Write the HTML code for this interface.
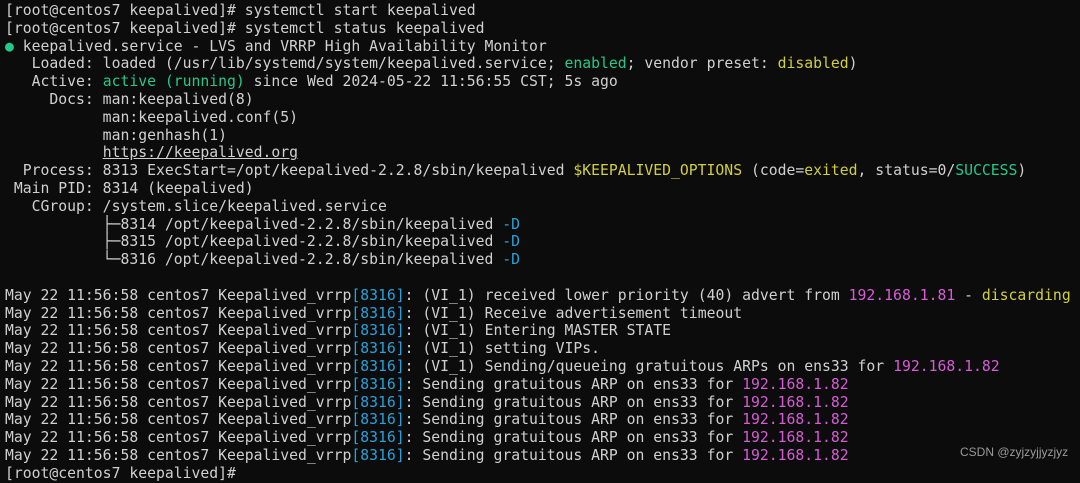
<!DOCTYPE html>
<html><head><meta charset="utf-8"><style>
html,body{margin:0;padding:0;background:#0c0c0c;width:1080px;height:469px;overflow:hidden}
pre{margin:0;position:absolute;left:5px;top:2px;font-family:"DejaVu Sans Mono","Liberation Mono",monospace;font-size:14.76px;line-height:17.8px;color:#d0d0d0}
.g{color:#23c98a}.y{color:#d2cf3a}.m{color:#d65cd6}.b{color:#2aa0d8}.u{text-decoration:underline}
.wm{position:absolute;left:960px;top:445px;font-family:"Liberation Sans",sans-serif;font-size:12px;color:#9a9a9a}
</style></head><body>
<pre>[root@centos7 keepalived]# systemctl start keepalived
[root@centos7 keepalived]# systemctl status keepalived
<span class="g">●</span> keepalived.service - LVS and VRRP High Availability Monitor
   Loaded: loaded (/usr/lib/systemd/system/keepalived.service; <span class="g">enabled</span>; vendor preset: <span class="y">disabled</span>)
   Active: <span class="g">active (running)</span> since Wed 2024-05-22 11:56:55 CST; 5s ago
     Docs: man:keepalived(8)
           man:keepalived.conf(5)
           man:genhash(1)
           <span class="u">https://keepalived.org</span>
  Process: 8313 ExecStart=/opt/keepalived-2.2.8/sbin/keepalived <span class="y">$KEEPALIVED_OPTIONS</span> (code=<span class="y">exited</span>, status=0/<span class="g">SUCCESS</span>)
 Main PID: 8314 (keepalived)
   CGroup: /system.slice/keepalived.service
           ├─8314 /opt/keepalived-2.2.8/sbin/keepalived <span class="b">-D</span>
           ├─8315 /opt/keepalived-2.2.8/sbin/keepalived <span class="b">-D</span>
           └─8316 /opt/keepalived-2.2.8/sbin/keepalived <span class="b">-D</span>

May 22 11:56:58 centos7 Keepalived_vrrp<span class="b">[8316]</span>: (VI_1) received lower priority (40) advert from <span class="m">192.168.1.81</span> - <span class="y">discarding</span>
May 22 11:56:58 centos7 Keepalived_vrrp<span class="b">[8316]</span>: (VI_1) Receive advertisement timeout
May 22 11:56:58 centos7 Keepalived_vrrp<span class="b">[8316]</span>: (VI_1) Entering MASTER STATE
May 22 11:56:58 centos7 Keepalived_vrrp<span class="b">[8316]</span>: (VI_1) setting VIPs.
May 22 11:56:58 centos7 Keepalived_vrrp<span class="b">[8316]</span>: (VI_1) Sending/queueing gratuitous ARPs on ens33 for <span class="m">192.168.1.82</span>
May 22 11:56:58 centos7 Keepalived_vrrp<span class="b">[8316]</span>: Sending gratuitous ARP on ens33 for <span class="m">192.168.1.82</span>
May 22 11:56:58 centos7 Keepalived_vrrp<span class="b">[8316]</span>: Sending gratuitous ARP on ens33 for <span class="m">192.168.1.82</span>
May 22 11:56:58 centos7 Keepalived_vrrp<span class="b">[8316]</span>: Sending gratuitous ARP on ens33 for <span class="m">192.168.1.82</span>
May 22 11:56:58 centos7 Keepalived_vrrp<span class="b">[8316]</span>: Sending gratuitous ARP on ens33 for <span class="m">192.168.1.82</span>
May 22 11:56:58 centos7 Keepalived_vrrp<span class="b">[8316]</span>: Sending gratuitous ARP on ens33 for <span class="m">192.168.1.82</span>
[root@centos7 keepalived]# </pre>
<div class="wm">CSDN @zyjzyjjyzjyz</div>
</body></html>
